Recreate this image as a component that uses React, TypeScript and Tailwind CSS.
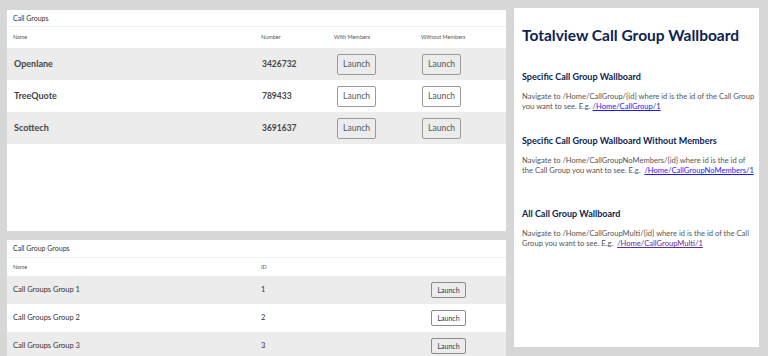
const callGroups = [
  { name: 'Openlane', number: '3426732' },
  { name: 'TreeQuote', number: '789433' },
  { name: 'Scottech', number: '3691637' },
];

const groupGroups = [
  { name: 'Call Groups Group 1', id: '1' },
  { name: 'Call Groups Group 2', id: '2' },
  { name: 'Call Groups Group 3', id: '3' },
];

function LaunchButton({ small }: { small?: boolean }) {
  return (
    <button
      className={
        small
          ? 'h-[16px] w-[35px] rounded-[2px] border border-[#8a8a8a] bg-transparent text-[7px] leading-none text-[#333]'
          : 'h-[21px] w-[39px] rounded-[2px] border-[1.5px] border-[#9a9a9a] bg-transparent text-[8.5px] leading-none text-[#555]'
      }
    >
      Launch
    </button>
  );
}

export default function App() {
  return (
    <div
      className="flex h-[356px] w-[768px] overflow-hidden bg-[#d7d7d7]"
      style={{ fontFamily: 'Lato, "Open Sans", sans-serif' }}
    >
      <div className="flex w-[506px] flex-col gap-[9px] pl-[7px] pt-[10px]">
        <section className="h-[221px] bg-white">
          <div className="flex h-[17px] items-center border-b border-[#efefef] pl-[6px] text-[7px] text-[#333]">
            Call Groups
          </div>
          <div className="grid h-[21px] grid-cols-[248px_73px_87px_1fr] items-center pl-[6px] text-[5.5px] text-[#555]">
            <div>Name</div>
            <div>Number</div>
            <div>With Members</div>
            <div>Without Members</div>
          </div>
          {callGroups.map((g, i) => (
            <div
              key={g.name}
              className={`grid h-[32px] grid-cols-[248px_73px_87px_1fr] items-center pl-[6px] ${i % 2 === 0 ? 'bg-[#ececec]' : 'bg-white'}`}
            >
              <div className="pl-[1px] text-[9px] font-bold text-[#444]">{g.name}</div>
              <div className="pl-[1px] text-[8.5px] font-bold text-[#444]">{g.number}</div>
              <div className="flex items-center pl-[3px]">
                <LaunchButton />
              </div>
              <div className="flex items-center pl-[1px]">
                <LaunchButton />
              </div>
            </div>
          ))}
        </section>

        <section className="h-[115px] bg-white">
          <div className="flex h-[18px] items-center border-b border-[#efefef] pl-[6px] text-[7px] text-[#333]">
            Call Group Groups
          </div>
          <div className="grid h-[18px] grid-cols-[248px_170px_1fr] items-center pl-[6px] text-[5.5px] text-[#555]">
            <div>Name</div>
            <div>ID</div>
            <div />
          </div>
          {groupGroups.map((g, i) => (
            <div
              key={g.name}
              className={`grid h-[28px] grid-cols-[248px_170px_1fr] items-center pl-[6px] ${i % 2 === 0 ? 'bg-[#ececec]' : 'bg-white'}`}
            >
              <div className="text-[7.5px] text-[#333]">{g.name}</div>
              <div className="text-[7.5px] text-[#333]">{g.id}</div>
              <div className="flex items-center">
                <LaunchButton small />
              </div>
            </div>
          ))}
        </section>
      </div>

      <aside className="ml-[8px] mt-[8px] h-[339px] w-[245px] bg-white pl-[8px] pr-[4px] pt-[17px] text-[7.6px] leading-[10px] text-[#555]">
        <h1 className="text-[15.5px] font-bold leading-[20px] text-[#0c2354]">Totalview Call Group Wallboard</h1>

        <h2 className="mt-[26px] text-[9px] font-bold leading-[12px] text-[#0c2354]">Specific Call Group Wallboard</h2>
        <p className="mt-[8px]">
          Navigate to /Home/CallGroup/{'{id}'} where id is the id of the Call Group you want to see. E.g.{' '}
          <a href="#" className="text-[#1a1aff] underline">/Home/CallGroup/1</a>
        </p>

        <h2 className="mt-[24px] text-[9px] font-bold leading-[12px] text-[#0c2354]">
          Specific Call Group Wallboard Without Members
        </h2>
        <p className="mt-[8px]">
          Navigate to /Home/CallGroupNoMembers/{'{id}'} where id is the id of the Call Group you want to see. E.g.&nbsp;{' '}
          <a href="#" className="text-[#1a1aff] underline">/Home/CallGroupNoMembers/1</a>
        </p>

        <h2 className="mt-[33px] text-[9px] font-bold leading-[12px] text-[#0c2354]">All Call Group Wallboard</h2>
        <p className="mt-[8px]">
          Navigate to /Home/CallGroupMulti/{'{id}'} where id is the id of the Call Group you want to see. E.g.&nbsp;{' '}
          <a href="#" className="text-[#6a2b96] underline">/Home/CallGroupMulti/1</a>
        </p>
      </aside>
    </div>
  );
}
